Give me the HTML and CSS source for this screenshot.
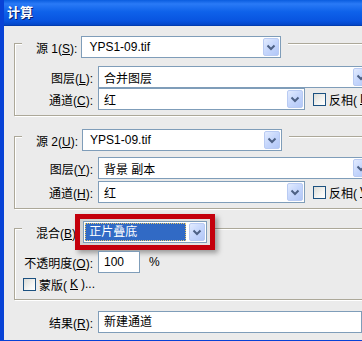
FILE: index.html
```html
<!DOCTYPE html>
<html lang="zh-CN">
  <head>
    <meta charset="UTF-8" />
    <title>计算</title>
    <link rel="stylesheet" href="styles.css">
  </head>
  <body>
    <div class="window">
      <div class="titlebar">计算</div>

      <div class="client">
        <!-- 源 1 -->
        <div class="group g-src1">
          <div class="legend">
            <span class="legend-label">源 1(<u>S</u>):</span>
            <div class="combo combo-src">
              <span class="combo-text">YPS1-09.tif</span>
              <span class="drop"><svg width="16" height="18" viewBox="0 0 16 18"><path d="M4.5 7.5 L8 11 L11.5 7.5" fill="none" stroke="#4d6185" stroke-width="2"/></svg></span>
            </div>
          </div>
          <div class="row row-first">
            <span class="label">图层(<u>L</u>):</span>
            <div class="combo combo-wide">
              <span class="combo-text">合并图层</span>
              <span class="drop"><svg width="16" height="18" viewBox="0 0 16 18"><path d="M4.5 7.5 L8 11 L11.5 7.5" fill="none" stroke="#4d6185" stroke-width="2"/></svg></span>
            </div>
          </div>
          <div class="row">
            <span class="label">通道(<u>C</u>):</span>
            <div class="combo combo-chan">
              <span class="combo-text">红</span>
              <span class="drop"><svg width="16" height="18" viewBox="0 0 16 18"><path d="M4.5 7.5 L8 11 L11.5 7.5" fill="none" stroke="#4d6185" stroke-width="2"/></svg></span>
            </div>
            <span class="check"><span class="box"></span>反相(<u>I</u>)</span>
          </div>
        </div>

        <!-- 源 2 -->
        <div class="group g-src2">
          <div class="legend">
            <span class="legend-label">源 2(<u>U</u>):</span>
            <div class="combo combo-src">
              <span class="combo-text">YPS1-09.tif</span>
              <span class="drop"><svg width="16" height="18" viewBox="0 0 16 18"><path d="M4.5 7.5 L8 11 L11.5 7.5" fill="none" stroke="#4d6185" stroke-width="2"/></svg></span>
            </div>
          </div>
          <div class="row row-first">
            <span class="label">图层(<u>Y</u>):</span>
            <div class="combo combo-wide">
              <span class="combo-text">背景 副本</span>
              <span class="drop"><svg width="16" height="18" viewBox="0 0 16 18"><path d="M4.5 7.5 L8 11 L11.5 7.5" fill="none" stroke="#4d6185" stroke-width="2"/></svg></span>
            </div>
          </div>
          <div class="row">
            <span class="label">通道(<u>H</u>):</span>
            <div class="combo combo-chan">
              <span class="combo-text">红</span>
              <span class="drop"><svg width="16" height="18" viewBox="0 0 16 18"><path d="M4.5 7.5 L8 11 L11.5 7.5" fill="none" stroke="#4d6185" stroke-width="2"/></svg></span>
            </div>
            <span class="check"><span class="box"></span>反相(<u>V</u>)</span>
          </div>
        </div>

        <!-- 混合 -->
        <div class="group g-blend">
          <div class="legend">
            <span class="legend-label">混合(<u>B</u>):</span>
            <div class="highlight">
              <div class="combo combo-blend">
                <span class="selected">正片叠底</span>
                <span class="drop"><svg width="16" height="18" viewBox="0 0 16 18"><path d="M4.5 7.5 L8 11 L11.5 7.5" fill="none" stroke="#4d6185" stroke-width="2"/></svg></span>
              </div>
            </div>
          </div>
          <div class="row row-first">
            <span class="label">不透明度(<u>O</u>):</span>
            <div class="field field-opacity">100</div>
            <span class="percent">%</span>
          </div>
          <div class="row row-mask">
            <span class="check"><span class="box"></span>蒙版(<u>K</u>)...</span>
          </div>
        </div>

        <!-- 结果 -->
        <div class="row row-result">
          <span class="label">结果(<u>R</u>):</span>
          <div class="field field-result">新建通道</div>
        </div>
      </div>
    </div>
  </body>
</html>
```

FILE: styles.css
```css
* {
  margin: 0;
  padding: 0;
  box-sizing: border-box;
}

body {
  width: 362px;
  height: 341px;
  overflow: hidden;
  background: #ebebeb;
  font-family: 'Liberation Sans', 'Noto Sans CJK SC', sans-serif;
  font-size: 12px;
  color: #000;
}

u {
  text-decoration: underline;
  text-underline-offset: 1px;
}

.window {
  height: 341px;
  border-left: 4px solid #0842d6;
  border-bottom: 1px solid #0842d6;
  overflow: hidden;
}

.titlebar {
  height: 26px;
  line-height: 25px;
  padding-left: 3px;
  color: #fff;
  font-size: 13px;
  font-weight: bold;
  text-shadow: 1px 1px 0 #0a1f6d;
  background: linear-gradient(#0a5ddf 0%, #2a7af6 15%, #0e62ea 45%, #0854e0 80%, #0446c8 96%, #003399 100%);
}

.client {
  padding-left: 10px;
}

/* Cadres gravés */
.group {
  margin-right: -60px;
  border: 1px solid #aca899;
  box-shadow: inset 1px 1px 0 #fff, 1px 1px 0 #fff;
  padding-bottom: 5px;
}

.g-src1 {
  margin-top: 17px;
}

.g-src2 {
  margin-top: 20px;
}

.g-blend {
  margin-top: 19px;
  padding-bottom: 7px;
}

.legend {
  display: flex;
  align-items: center;
  width: max-content;
  height: 22px;
  margin: -8px 0 0 7px;
  padding: 0 7px 0 14px;
  background: #ebebeb;
}

.legend-label {
  margin-right: 4px;
  white-space: nowrap;
}

.row {
  display: flex;
  align-items: center;
  height: 22px;
}

.g-src1 .row-first {
  margin-top: 8px;
}

.g-src2 .row-first {
  margin-top: 6px;
}

.g-src2 .row + .row {
  margin-top: 2px;
}

.g-blend .row-first {
  margin-top: 8px;
}

.label {
  width: 78px;
  flex: none;
  margin-right: 5px;
  text-align: right;
  white-space: nowrap;
}

/* Listes déroulantes */
.combo {
  display: flex;
  align-items: center;
  height: 22px;
  padding: 1px;
  border: 1px solid #7f9db9;
  background: #fff;
  flex: none;
  white-space: nowrap;
}

.combo-text {
  flex: 1;
  padding-left: 4px;
}

.combo-src {
  width: 200px;
}

.combo-src .combo-text {
  padding-left: 6px;
}

.combo-wide {
  width: 273px;
}

.combo-chan {
  width: 207px;
}

.drop {
  display: block;
  width: 16px;
  height: 18px;
  border: 1px solid #b9cbf3;
  border-radius: 2px;
  background: linear-gradient(135deg, #e2ebfe 0%, #c5d6fc 50%, #b2c7f7 100%);
}

.drop svg {
  display: block;
  margin: -1px;
}

.check {
  display: flex;
  align-items: center;
  gap: 3px;
  margin-left: 8px;
  white-space: nowrap;
}

.box {
  width: 13px;
  height: 13px;
  border: 1px solid #1c5180;
  background: linear-gradient(135deg, #dcdcd7 0%, #f4f4f2 60%, #fff 100%);
}

/* Mise en évidence rouge */
.highlight {
  margin: -7px -8px -7px -8px;
  padding: 2px 3px;
  border: 5px solid #c4000c;
  background: linear-gradient(135deg, #cfcfcf, #e6e6e6);
  box-shadow: 3px 3px 5px rgba(0, 0, 0, 0.35);
}

.combo-blend {
  width: 124px;
}

.selected {
  flex: 1;
  height: 18px;
  line-height: 16px;
  margin-right: 3px;
  padding-left: 3px;
  color: #fff;
  background: #316ac5;
  border: 1px dotted #e8c86a;
}

.field {
  height: 22px;
  line-height: 20px;
  border: 1px solid #7f9db9;
  background: #fff;
  padding-left: 5px;
  white-space: nowrap;
}

.field-opacity {
  width: 42px;
}

.percent {
  margin-left: 9px;
}

.row-mask {
  height: 16px;
  margin-top: 3px;
}

.row-result {
  margin-top: 11px;
}

.row-result .label {
  width: 79px;
}

.field-result {
  width: 300px;
}
```
